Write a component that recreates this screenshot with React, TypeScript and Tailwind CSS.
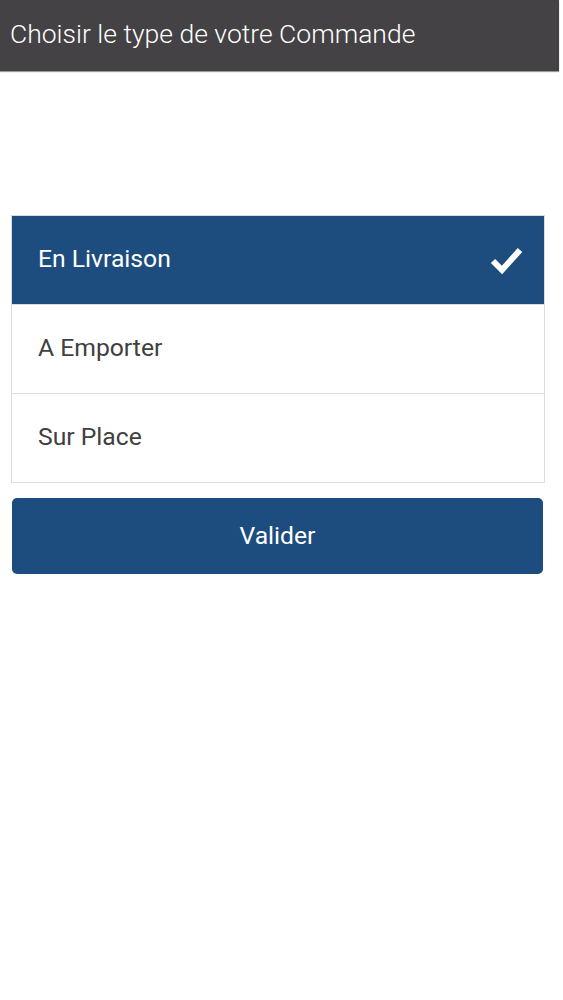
import React, { useState } from "react";

const options = ["En Livraison", "A Emporter", "Sur Place"];

export default function App() {
    const [selected, setSelected] = useState(0);

    return (
        <div className="min-h-[1000px] w-full bg-white" style={{ fontFamily: "Roboto, 'Noto Sans', sans-serif" }}>
            <header className="flex h-[71px] w-[559px] items-center bg-[#444245] pl-[10px] shadow-[0_1px_1px_rgba(0,0,0,0.4)]">
                <h1 className="-mt-[4px] text-[26.5px] font-light text-white">Choisir le type de votre Commande</h1>
            </header>

            <main className="px-[11px] pt-[144px]">
                <ul className="w-[534px] border border-[#dcdcdc]">
                    {options.map((option, i) => (
                        <li
                            key={option}
                            onClick={() => setSelected(i)}
                            className={
                                i === selected
                                    ? "flex h-[88px] items-center justify-between bg-[#1c4d7e] pl-[26px] pr-[20px] text-[24.7px] text-white"
                                    : "flex h-[89px] items-center border-t border-[#dcdcdc] pl-[26px] text-[24.7px] text-[#404040]"
                            }
                        >
                            <span className="-mt-[2px]">{option}</span>
                            {i === selected && (
                                <svg width="34" height="30" viewBox="0 0 34 30" fill="none">
                                    <path d="M3 16 L12 25 L30 5" stroke="white" strokeWidth="6" strokeLinecap="butt" strokeLinejoin="miter" />
                                </svg>
                            )}
                        </li>
                    ))}
                </ul>

                <button className="mt-[15px] ml-[1px] flex h-[76px] w-[531px] items-center justify-center rounded-[5px] bg-[#1c4d7e] text-[24.7px] text-white">
                    Valider
                </button>
            </main>
        </div>
    );
}
